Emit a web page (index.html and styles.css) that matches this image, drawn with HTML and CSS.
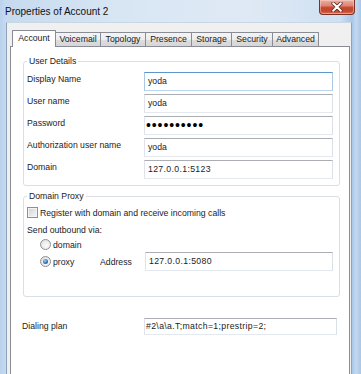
FILE: index.html
```html
<!DOCTYPE html>
<html>
<head>
<meta charset="utf-8">
<link rel="stylesheet" href="styles.css">
</head>
<body>
<div class="window">
  <div class="titlebar">
    <span class="title">Properties of Account 2</span>
    <div class="close">
      <svg width="12" height="10" viewBox="0 0 12 10">
        <path d="M2.2 1.2 L9.8 8.8 M9.8 1.2 L2.2 8.8" stroke="#5a2a22" stroke-width="3.6" stroke-linecap="round"/>
        <path d="M2.2 1.2 L9.8 8.8 M9.8 1.2 L2.2 8.8" stroke="#ffffff" stroke-width="2" stroke-linecap="round"/>
      </svg>
    </div>
  </div>
  <div class="client">
    <div class="tabs">
      <div class="tab active t-account">Account</div>
      <div class="tab t-voicemail">Voicemail</div>
      <div class="tab t-topology">Topology</div>
      <div class="tab t-presence">Presence</div>
      <div class="tab t-storage">Storage</div>
      <div class="tab t-security">Security</div>
      <div class="tab t-advanced">Advanced</div>
    </div>
    <div class="panel">
      <fieldset class="group details">
        <legend>User Details</legend>
        <div class="row"><span class="label">Display Name</span><div class="field focus">yoda</div></div>
        <div class="row"><span class="label">User name</span><div class="field">yoda</div></div>
        <div class="row"><span class="label">Password</span><div class="field pw">••••••••••</div></div>
        <div class="row"><span class="label">Authorization user name</span><div class="field">yoda</div></div>
        <div class="row"><span class="label">Domain</span><div class="field num">127.0.0.1:5123</div></div>
      </fieldset>
      <fieldset class="group proxy">
        <legend>Domain Proxy</legend>
        <div class="check-row"><span class="checkbox"></span><span>Register with domain and receive incoming calls</span></div>
        <div class="send">Send outbound via:</div>
        <div class="radio-row domain-row"><span class="radio"></span><span class="opt">domain</span></div>
        <div class="radio-row proxy-row"><span class="radio on"></span><span class="opt">proxy</span><span class="addr">Address</span><div class="field num">127.0.0.1:5080</div></div>
      </fieldset>
      <div class="dial"><span class="label">Dialing plan</span><div class="field num">#2\a\a.T;match=1;prestrip=2;</div></div>
    </div>
  </div>
</div>
</body>
</html>
```
FILE: styles.css
```css
html, body {
  margin: 0;
  padding: 0;
}
body {
  font-family: "Liberation Sans", Arial, sans-serif;
  font-size: 8.7px;
  color: #1b1b1b;
  width: 361px;
  height: 374px;
  overflow: hidden;
}
.window {
  width: 361px;
  height: 374px;
  display: flex;
  flex-direction: column;
  background: linear-gradient(to right, #bad2ec 0px, #c6daef 6px, #d8e6f4 120px, #dfe9f5 250px, #cfe0f2 340px, #a9c7e9 352px, #c3d9f0 356px, #a8c6ea 361px);
  overflow: hidden;
}
.titlebar {
  height: 22px;
  flex: none;
  display: flex;
  align-items: flex-start;
  padding-left: 5px;
}
.title {
  font-size: 10px;
  line-height: 12px;
  margin-top: 6px;
  color: #111;
}
.close {
  margin-left: auto;
  margin-right: 6px;
  width: 34px;
  height: 14px;
  border: 1px solid #7a3226;
  border-top: none;
  border-radius: 0 0 4px 4px;
  background: linear-gradient(#eab0a5 0%, #dd8573 40%, #c8452e 55%, #c44a30 80%, #d9735a 100%);
  box-shadow: inset 0 0 0 1px rgba(255, 220, 210, 0.45);
  display: flex;
  align-items: center;
  justify-content: center;
}
.close svg {
  display: block;
}
.client {
  flex: 1;
  margin: 0 9px 0 6px;
  border-left: 1px solid #8ea3bb;
  border-right: 1px solid #8ea3bb;
  border-top: 1px solid #c9d6e4;
  background: #f0f0f0;
  padding: 7px 1px 0 3px;
  display: flex;
  flex-direction: column;
}
.tabs {
  height: 16px;
  display: flex;
  align-items: flex-end;
  padding-left: 2px;
  flex: none;
}
.tab {
  box-sizing: border-box;
  height: 14px;
  border: 1px solid #898c95;
  border-bottom: none;
  margin-right: -1px;
  background: linear-gradient(#f4f4f4 0%, #ececec 50%, #dedede 52%, #d6d6d6 100%);
  font-size: 8.7px;
  line-height: 12px;
  text-align: center;
  border-radius: 1px 1px 0 0;
  white-space: nowrap;
}
.tab.active {
  height: 17px;
  margin-bottom: -1px;
  background: #ffffff;
  position: relative;
  z-index: 1;
  line-height: 15px;
  padding-bottom: 1px;
}
.t-account { width: 44px; }
.t-voicemail { width: 46px; }
.t-topology { width: 46px; }
.t-presence { width: 47px; }
.t-storage { width: 41px; }
.t-security { width: 42px; }
.t-advanced { width: 47px; }
.panel {
  flex: 1;
  background: #ffffff;
  border: 1px solid #898c95;
  border-bottom: none;
  padding: 0 9px 0 12px;
}
.group {
  margin: 0;
  border: 1px solid #d8e0e6;
  border-radius: 3px;
  padding: 5px 6px 6px 3px;
  min-width: 0;
}
.group legend {
  padding: 0 2px;
  line-height: 12px;
  margin-left: 0;
}
.details {
  margin-top: 8px;
}
.row {
  display: flex;
  align-items: flex-start;
  height: 19px;
  margin-bottom: 3px;
}
.row:last-child {
  margin-bottom: 0;
}
.label {
  width: 117px;
  flex: none;
  line-height: 15px;
}
.field {
  box-sizing: border-box;
  width: 189px;
  height: 19px;
  border: 1px solid;
  border-color: #abadb3 #dbdfe6 #e3e9ef #e2e3ea;
  background: #ffffff;
  padding-left: 3px;
  line-height: 17px;
  white-space: nowrap;
  overflow: hidden;
}
.field.num {
  letter-spacing: 0.35px;
}
.field.focus {
  border-color: #5e95cc #a8c8e6 #b9d5ee #a8c8e6;
}
.field.pw {
  font-size: 14px;
  letter-spacing: 0.9px;
  padding-left: 1px;
  color: #000;
}
.proxy {
  margin-top: 4px;
  padding: 3px 6px 25px 3px;
}
.check-row {
  display: flex;
  align-items: center;
  height: 15px;
}
.checkbox {
  box-sizing: border-box;
  width: 11px;
  height: 11px;
  border: 1px solid #8f8f8f;
  background: linear-gradient(135deg, #d3d3d3, #f6f6f6);
  box-shadow: inset 0 0 0 1px #f4f4f4;
  margin-right: 2px;
  flex: none;
}
.send {
  line-height: 15px;
  margin-top: 3px;
}
.radio-row {
  display: flex;
  align-items: center;
  padding-left: 13px;
}
.domain-row {
  height: 13px;
}
.proxy-row {
  height: 19px;
  margin-top: 1px;
}
.radio {
  box-sizing: border-box;
  width: 11px;
  height: 11px;
  border-radius: 50%;
  border: 1px solid #8f8f8f;
  background: radial-gradient(circle at 60% 60%, #fdfdfd 0%, #e4e4e4 70%, #d2d2d2 100%);
  margin-right: 2px;
  flex: none;
  display: flex;
  align-items: center;
  justify-content: center;
}
.radio.on::after {
  content: "";
  width: 5px;
  height: 5px;
  border-radius: 50%;
  background: radial-gradient(circle at 40% 35%, #a9d3f7 0%, #2f74b8 55%, #1d4f86 100%);
}
.opt {
  width: 47px;
  flex: none;
}
.addr {
  width: 45px;
  flex: none;
}
.dial {
  display: flex;
  align-items: center;
  margin-top: 21px;
  margin-left: -1px;
  height: 17px;
}
.dial .label {
  width: 122px;
}
.dial .field {
  width: 193px;
  height: 17px;
  line-height: 15px;
  padding-left: 1px;
}
```
